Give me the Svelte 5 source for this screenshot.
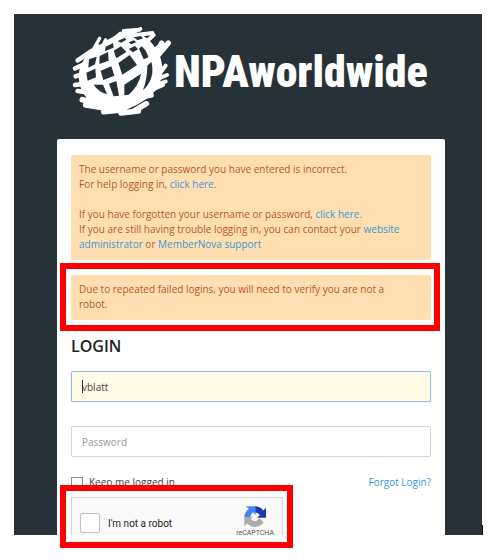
<script lang="ts">
  let username = $state('vblatt');
  let password = $state('');
  let keepLoggedIn = $state(false);
  let notRobot = $state(false);
</script>

<main class="stage">
  <header class="brand">
    <svg class="globe" viewBox="30 30 306 276" aria-hidden="true">
      <g fill="#fff">
        <path d="M56 160 Q74 108 122 86 Q160 60 205 46 Q250 54 277 90 Q308 130 304 175 Q296 228 250 256 Q200 290 160 290 Q106 286 78 250 Q46 215 56 160Z" />
      </g>
      <g stroke="#fff" fill="none" stroke-linecap="round">
        <path stroke-width="14" d="M50 136 L92 108 M42 160 L75 146 M44 184 L80 174 M42 210 L75 206 M50 228 L80 232" />
        <path stroke-width="10" d="M84 126 L116 70 M122 100 L134 74 M98 116 L112 92" />
        <path stroke-width="12" d="M152 78 L178 56 M188 48 L236 44 M206 54 L238 42 M226 60 L274 54 M256 80 L278 60" />
        <path stroke-width="16" d="M252 130 L300 92 M284 118 L302 84 M290 122 L322 84" />
        <path stroke-width="12" d="M292 182 L314 152 M290 192 L318 180 M284 210 L314 200 M270 226 L306 210" />
        <path stroke-width="17" d="M64 254 L110 264 M74 270 L140 280 M128 290 L190 284 M180 294 L232 288 M222 286 L256 266 M248 244 L270 240" />
      </g>
      <g fill="#263238">
        <path d="M84 133 L107 125 L102 148 L82 158 Z" />
        <path d="M116 123 L141 111 L143 137 L115 147 Z" />
        <path d="M134 95 L156 84 L158 98 L132 108 Z" />
        <path d="M158 107 L180 94 L196 111 L166 130 Z" />
        <path d="M170 78 L192 68 L196 74 L180 83 Z" />
        <path d="M203 82 L219 76 L226 82 L210 88 Z" />
        <path d="M203 102 L222 93 L231 103 L216 112 Z" />
        <path d="M218 67 L240 63 L246 70 L230 76 Z" />
        <path d="M76 173 L103 161 L105 187 L80 197 Z" />
        <path d="M119 167 L151 154 L160 182 L127 195 Z" />
        <path d="M172 144 L206 120 L228 150 L184 179 Z" />
        <path d="M234 101 L242 94 Q258 108 262 127 L248 133 Z" />
        <path d="M144 206 L166 198 L174 242 L158 244 Z" />
        <path d="M190 209 L240 176 Q235 210 203 239 L190 241 Z" />
        <path d="M259 152 L271 140 Q284 190 246 226 Q259 190 259 152Z" />
        <path d="M98 209 L126 209 L138 238 Q112 230 98 209Z" />
      </g>
    </svg>
    <span class="brand-name">NPAworldwide</span>
  </header>

  <form class="card">
    <div class="alert" role="alert">
      <p>The username or password you have entered is incorrect.<br />For help logging in, <a href="#help">click here</a>.</p>
      <p>If you have forgotten your username or password, <a href="#forgot">click here.</a><br />If you are still having trouble logging in, you can contact your <a href="#admin">website administrator</a> or <a href="#support">MemberNova support</a></p>
    </div>

    <div class="marked marked-alert">
      <div class="alert" role="alert">
        <p>Due to repeated failed logins, you will need to verify you are not a robot.</p>
      </div>
    </div>

    <h1>LOGIN</h1>

    <div class="field">
      <input class="active" type="text" aria-label="Username" bind:value={username} />
      <span class="caret"></span>
    </div>
    <div class="field">
      <input type="password" aria-label="Password" placeholder="Password" bind:value={password} />
    </div>

    <div class="options">
      <label><input type="checkbox" bind:checked={keepLoggedIn} />Keep me logged in</label>
      <a href="#forgot">Forgot Login?</a>
    </div>

    <div class="marked marked-captcha">
      <div class="captcha">
        <label><input type="checkbox" bind:checked={notRobot} />I'm not a robot</label>
        <div class="captcha-brand">
          <svg viewBox="0 0 64 64" aria-hidden="true">
            <path fill="#1c3aa9" d="M64 32V5l-8 8A31 31 0 0 0 32 1v18c7 0 11 3 14 8l-8 7h26Z" />
            <path fill="#4285f4" d="M32 1H6l8 8A31 31 0 0 0 1 32h18c0-7 3-11 8-14l7 8V1Z" />
            <path fill="#ababab" d="M1 32v27l8-8a31 31 0 0 0 48-3L44 35c-3 6-7 9-12 9-6 0-10-3-12-7l7-5H1Z" />
          </svg>
          <span>reCAPTCHA</span>
        </div>
      </div>
    </div>
  </form>
  <span class="edge-mark"></span>
</main>

<style>
  :global(body) { background: #fff; }
  .stage {
    position: relative;
    margin: 14px 14px 25px;
    padding: 0 37px 0 43px;
    background: #263238;
    font: 10px/15px "Open Sans", "Noto Sans", sans-serif;
    color: #444;
  }
  a { color: #3b97d3; text-decoration: none; }

  .brand { display: flex; align-items: center; height: 125px; padding: 0 14px; gap: 1px; box-sizing: border-box; }
  .globe { flex: none; width: 102px; height: 92px; margin-bottom: 11px; }
  .brand-name {
    color: #fff;
    font: 900 44px/48px "Roboto Condensed", "Open Sans Condensed", "DejaVu Sans Condensed", sans-serif;
    margin-bottom: 9px;
  }

  .card { padding: 16px 14px 0; background: #fff; border-radius: 2px 2px 0 0; }
  .alert { padding: 7px 20px 8px 8px; background: #ffdfb1; border-radius: 2px; color: #bb552e; }
  .alert p { margin: 0; }
  .alert p + p { margin-top: 15px; }

  .marked { position: relative; }
  .marked::after { content: ""; position: absolute; border: 6px solid #fe0000; pointer-events: none; }
  .marked-alert { margin-top: 15px; }
  .marked-alert::after { inset: -12px -9px -11px -11px; }
  .marked-captcha { width: 212px; margin-top: 7px; }
  .marked-captcha::after { inset: -12px -10px -13px -11px; }

  h1 { margin: 15px 0 14px; font-size: 16px; line-height: 22px; font-weight: 600; color: #212121; }

  .field { position: relative; margin-bottom: 24px; }
  .field input {
    display: block;
    width: 100%;
    height: 31px;
    box-sizing: border-box;
    padding: 0 10px;
    border: 1px solid #d5d5d5;
    border-radius: 2px;
    background: #fff;
    font: inherit;
    color: #444;
    outline: none;
  }
  .field input::placeholder { color: #999; opacity: 1; }
  .field input.active { border-color: #9dbbe3; background: #fffbe6; box-shadow: 0 0 1px #9dbbe3; }
  .caret { position: absolute; left: 11px; top: 9px; width: 1px; height: 13px; background: #333; }

  .options { display: flex; justify-content: space-between; align-items: center; margin-top: -6px; }
  label { display: flex; align-items: center; }
  label input { appearance: none; flex: none; margin: 0; box-sizing: border-box; background: #fff; border: 1px solid #8a8a8a; }
  .options input { width: 12px; height: 12px; margin-right: 6px; }
  .options label { color: #444; }

  .captcha {
    display: flex;
    justify-content: space-between;
    align-items: flex-start;
    height: 38px;
    box-sizing: border-box;
    overflow: hidden;
    padding: 0 8px;
    border: 1px solid #d6d6d6;
    border-bottom: 0;
    background: #f9f9f9;
    font-family: Roboto, sans-serif;
  }
  .captcha label { margin-top: 15px; color: #222; }
  .captcha label input { width: 20px; height: 20px; margin-right: 8px; border-color: #c1c1c1; border-radius: 2px; }
  .captcha-brand { display: flex; flex-direction: column; align-items: center; margin-top: 8px; }
  .captcha-brand svg { width: 22px; height: 22px; }
  .captcha-brand span { font-size: 7px; line-height: 8px; margin-top: 1px; color: #555; }

  .edge-mark { position: absolute; left: 100%; bottom: 0; width: 1px; height: 10px; background: #000; }
</style>
